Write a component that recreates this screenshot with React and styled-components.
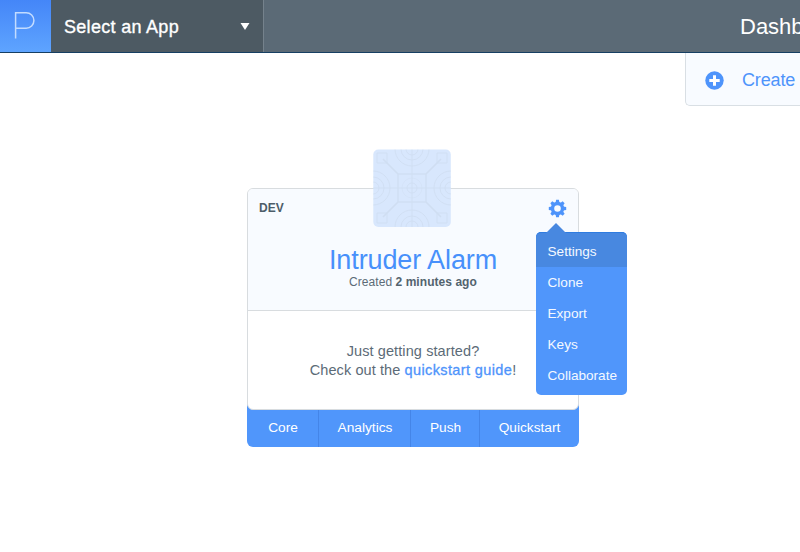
import React from "react";
import styled, { createGlobalStyle } from "styled-components";

const Global = createGlobalStyle`
  *, *::before, *::after { box-sizing: border-box; }
  html, body { margin: 0; background: #fff; overflow: hidden; }
  body { font-family: "Liberation Sans", Arial, sans-serif; color: #5c6b77; }
`;

const Page = styled.div`
  width: 800px;
  height: 552px;
  overflow: hidden;
  background: #fff;
`;

const Header = styled.header`
  display: flex;
  height: 53px;
  background: #5b6a76;
  border-bottom: 1px solid #163f63;
`;

const Logo = styled.div`
  width: 51px;
  background: linear-gradient(#4486f8, #5ea4ff);
  svg { display: block; }
`;

const AppSelect = styled.div`
  display: flex;
  align-items: center;
  justify-content: space-between;
  width: 213px;
  padding: 2px 13px 0 13px;
  background: #4d5a63;
  border-right: 1px solid #75828c;
  color: #fff;
  svg { display: block; margin-top: -2px; }
`;

const SelectLabel = styled.span`
  font-size: 18px;
  line-height: 24px;
  letter-spacing: 0.3px;
  -webkit-text-stroke: 0.35px #fff;
  white-space: nowrap;
`;

const PageTitle = styled.div`
  margin-left: auto;
  width: 60px;
  overflow: hidden;
  white-space: nowrap;
  font-size: 22px;
  line-height: 54px;
  color: #fff;
`;

const Create = styled.div`
  display: flex;
  align-items: center;
  margin-left: auto;
  width: 115px;
  height: 53px;
  padding: 2px 0 0 19px;
  gap: 18px;
  background: #f8fbff;
  border: solid #d9dfe4;
  border-width: 0 0 1px 1px;
  border-bottom-left-radius: 5px;
  color: #4e94fb;
  font-size: 18px;
  letter-spacing: -0.15px;
  white-space: nowrap;
  svg { flex: none; }
`;

const Card = styled.section`
  position: relative;
  width: 332px;
  height: 259px;
  margin: 82px 0 0 247px;
  background: linear-gradient(transparent 50%, #5096fb 50%);
  border-radius: 6px;
`;

const CardBody = styled.div`
  height: 222px;
  border: 1px solid #d8dcdf;
  border-radius: 6px;
  background: #fff;
  overflow: hidden;
`;

const Summary = styled.div`
  height: 122px;
  padding-top: 12px;
  border-bottom: 1px solid #d8dcdf;
  background: #f8fbff;
  text-align: center;
`;

const Environment = styled.div`
  padding-left: 11px;
  text-align: left;
  font-size: 12px;
  line-height: 14px;
  font-weight: bold;
  color: #4d5d69;
`;

const AppName = styled.h1`
  margin: 29px 0 0;
  font-size: 27px;
  line-height: 32px;
  font-weight: normal;
  letter-spacing: -0.1px;
  color: #4790fb;
`;

const Created = styled.div`
  margin-top: -2px;
  font-size: 12px;
  line-height: 16px;
  letter-spacing: 0.05px;
  b { color: #53636e; }
`;

const Guide = styled.p`
  margin: 31px 0 0;
  font-size: 14.5px;
  line-height: 19px;
  letter-spacing: 0.1px;
  text-align: center;
`;

const GuideLink = styled.a`
  color: #4e94fb;
  letter-spacing: 0.38px;
  -webkit-text-stroke: 0.3px #4e94fb;
`;

const Tabs = styled.nav`
  display: grid;
  grid-template-columns: 72px 92px 69px 99px;
  height: 37px;
`;

const Tab = styled.a`
  padding: 1px 0 0 1px;
  border-right: 1px solid #4485e8;
  text-align: center;
  font-size: 13.7px;
  line-height: 33px;
  color: #fff;
  &:last-child { border-right: 0; padding-left: 0; }
`;

const Tile = styled.svg`
  position: absolute;
  left: 126px;
  top: -39px;
`;

const Gear = styled.svg`
  position: absolute;
  left: 301px;
  top: 11px;
`;

const Menu = styled.div`
  position: absolute;
  left: 289px;
  top: 44px;
  width: 91px;
  height: 163px;
  border-radius: 5px;
  background: #5096fb;
  &::before {
    content: "";
    position: absolute;
    left: 10px;
    top: -9px;
    border: solid transparent;
    border-width: 0 10px 10px;
    border-bottom-color: #4888e0;
  }
`;

const MenuItem = styled.div`
  height: 31px;
  padding-left: 11.5px;
  font-size: 13.6px;
  line-height: 31px;
  color: #f4f9ff;
  &:first-of-type {
    height: 35px;
    padding-top: 3px;
    border-top: 1px solid #2f7ce0;
    border-radius: 5px 5px 0 0;
    background: #4888e0;
  }
`;

const teeth = [0, 45, 90, 135, 180, 225, 270, 315];

export default function App() {
  return (
    <Page>
      <Global />
      <Header>
        <Logo>
          <svg width="51" height="52" fill="none" stroke="#c3dcff" strokeWidth="1.5">
            <path d="M15.6 38.5V12.8h10.6a7.7 7.7 0 0 1 0 15.4H15.6" />
          </svg>
        </Logo>
        <AppSelect>
          <SelectLabel>Select an App</SelectLabel>
          <svg width="10" height="7"><path d="M0.5 0h9L5 7z" fill="#fff" /></svg>
        </AppSelect>
        <PageTitle>Dashb</PageTitle>
      </Header>
      <Create>
        <svg width="19" height="19">
          <circle cx="9.5" cy="9.5" r="9.2" fill="#4e94fb" />
          <path d="M9.5 4.3v10.4M4.3 9.5h10.4" stroke="#fff" strokeWidth="3" />
        </svg>
        Create
      </Create>
      <Card>
        <CardBody>
          <Summary>
            <Environment>DEV</Environment>
            <AppName>Intruder Alarm</AppName>
            <Created>Created <b>2 minutes ago</b></Created>
          </Summary>
          <Guide>
            Just getting started?<br />
            Check out the <GuideLink>quickstart guide</GuideLink>!
          </Guide>
        </CardBody>
        <Tabs>
          <Tab>Core</Tab>
          <Tab>Analytics</Tab>
          <Tab>Push</Tab>
          <Tab>Quickstart</Tab>
        </Tabs>
        <Tile width="78" height="78" viewBox="0 0 78 78">
          <defs><clipPath id="tile"><rect x="0.3" y="0.5" width="77.5" height="77.5" rx="5" /></clipPath></defs>
          <g clipPath="url(#tile)">
            <rect width="78" height="78" fill="#d8e7fd" />
            <g fill="none" stroke="#c6d6e8" strokeWidth="0.9" opacity="0.5">
              <path d="M39 0v78M0 39h78" />
              <path d="M25 25L10 10M53 25L68 10M25 53L10 68M53 53L68 68" strokeWidth="1.6" />
              <rect x="25" y="25" width="28" height="28" strokeWidth="1.3" />
              <circle cx="39" cy="39" r="5" />
              <circle cx="39" cy="39" r="10" opacity="0.5" />
              {[[39, 0], [0, 39], [78, 39], [39, 78]].map(([x, y]) => (
                <g key={`${x}-${y}`}>
                  <circle cx={x} cy={y} r="6" />
                  <circle cx={x} cy={y} r="11" />
                  <circle cx={x} cy={y} r="17" />
                </g>
              ))}
              <path d="M4 4h10v10H4zM64 4h10v10H64zM4 64h10v10H4zM64 64h10v10H64z" />
            </g>
          </g>
        </Tile>
        <Gear width="19" height="19" viewBox="-9.5 -9.5 19 19">
          <circle r="5" fill="none" stroke="#4e94fb" strokeWidth="3.4" />
          {teeth.map((a) => (
            <path key={a} d="M-2-5.5L-1.4-8.7H1.4L2-5.5z" fill="#4e94fb" transform={`rotate(${a})`} />
          ))}
        </Gear>
        <Menu>
          <MenuItem>Settings</MenuItem>
          <MenuItem>Clone</MenuItem>
          <MenuItem>Export</MenuItem>
          <MenuItem>Keys</MenuItem>
          <MenuItem>Collaborate</MenuItem>
        </Menu>
      </Card>
    </Page>
  );
}
